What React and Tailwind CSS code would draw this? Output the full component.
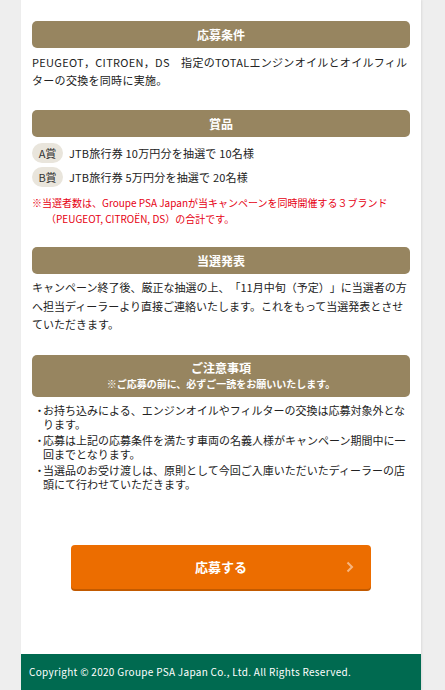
import React from "react";

const font = { fontFamily: '"Noto Sans CJK JP", "Noto Sans", sans-serif' };

function SectionHead({ children, sub }) {
  return (
    <div className="bg-[#978560] rounded-[5px] text-white text-center flex flex-col justify-center min-h-[27px] py-[5px]">
      <div className="text-[12px] font-bold leading-[16px]">{children}</div>
      {sub && <div className="text-[10px] font-bold leading-[16px]">{sub}</div>}
    </div>
  );
}

function Prize({ rank, text }) {
  return (
    <div className="flex items-center gap-[6px] h-[20px]">
      <span className="w-[31px] h-[20px] rounded-full bg-[#e9e5dc] flex items-center justify-center text-[11px] text-[#333]">
        {rank}賞
      </span>
      <span className="text-[11px] tracking-[0.2px] text-[#222]">{text}</span>
    </div>
  );
}

const notes = [
  "お持ち込みによる、エンジンオイルやフィルターの交換は応募対象外となります。",
  "応募は上記の応募条件を満たす車両の名義人様がキャンペーン期間中に一回までとなります。",
  "当選品のお受け渡しは、原則として今回ご入庫いただいたディーラーの店頭にて行わせていただきます。",
];

export default function App() {
  return (
    <div className="min-h-screen bg-[#eeeeee] [text-spacing-trim:space-all]" style={font}>
      <div className="ml-[21px] w-[400px] bg-white shadow-[1px_0_2px_rgba(0,0,0,0.08)]">
        <div className="px-[11px] pt-[21px] text-[#222]">
          {/* 応募条件 */}
          <SectionHead>応募条件</SectionHead>
          <p className="mt-[5px] text-[11px] leading-[18px] tracking-[0.3px]">
            PEUGEOT，CITROEN，DS　指定のTOTALエンジンオイルとオイルフィルターの交換を同時に実施。
          </p>

          {/* 賞品 */}
          <div className="mt-[21px]">
            <SectionHead>賞品</SectionHead>
          </div>
          <div className="mt-[6px] flex flex-col gap-[4px]">
            <Prize rank="A" text="JTB旅行券 10万円分を抽選で 10名様" />
            <Prize rank="B" text="JTB旅行券 5万円分を抽選で 20名様" />
          </div>
          <p className="mt-[8px] text-[10px] leading-[16px] text-[#e60012] pl-[14px] -indent-[14px]">
            ※当選者数は、Groupe PSA Japanが当キャンペーンを同時開催する３ブランド（PEUGEOT, CITROËN, DS）の合計です。
          </p>

          {/* 当選発表 */}
          <div className="mt-[20px]">
            <SectionHead>当選発表</SectionHead>
          </div>
          <p className="mt-[4px] text-[11px] leading-[18.5px]">
            キャンペーン終了後、厳正な抽選の上、「11月中旬（予定）」に当選者の方へ担当ディーラーより直接ご連絡いたします。これをもって当選発表とさせていただきます。
          </p>

          {/* ご注意事項 */}
          <div className="mt-[21px]">
            <SectionHead sub="※ご応募の前に、必ずご一読をお願いいたします。">ご注意事項</SectionHead>
          </div>
          <ul className="mt-[6px] flex flex-col gap-[2px] px-[2px]">
            {notes.map((n) => (
              <li key={n} className="flex text-[11px] leading-[14px]">
                <span className="w-[9px] shrink-0">・</span>
                <span>{n}</span>
              </li>
            ))}
          </ul>
        </div>

        {/* 応募ボタン */}
        <div className="pt-[54px] pb-[65px] flex justify-center">
          <button className="relative w-[300px] h-[44px] rounded-[4px] bg-[#ec6d00] shadow-[0_2px_0_#c25a00] text-white text-[13px] font-bold flex items-center justify-center">
            応募する
            <span className="absolute right-[17px] top-1/2 -translate-y-1/2 text-[#f7b680]">
              <svg width="8" height="12" viewBox="0 0 8 12" fill="none">
                <path d="M1.5 1.5L6 6L1.5 10.5" stroke="currentColor" strokeWidth="2" />
              </svg>
            </span>
          </button>
        </div>

        {/* フッター */}
        <footer className="bg-[#006a50] h-[36px] flex items-center px-[8px] text-white text-[10px] tracking-[0.3px]">
          Copyright © 2020 Groupe PSA Japan Co., Ltd. All Rights Reserved.
        </footer>
      </div>
    </div>
  );
}
